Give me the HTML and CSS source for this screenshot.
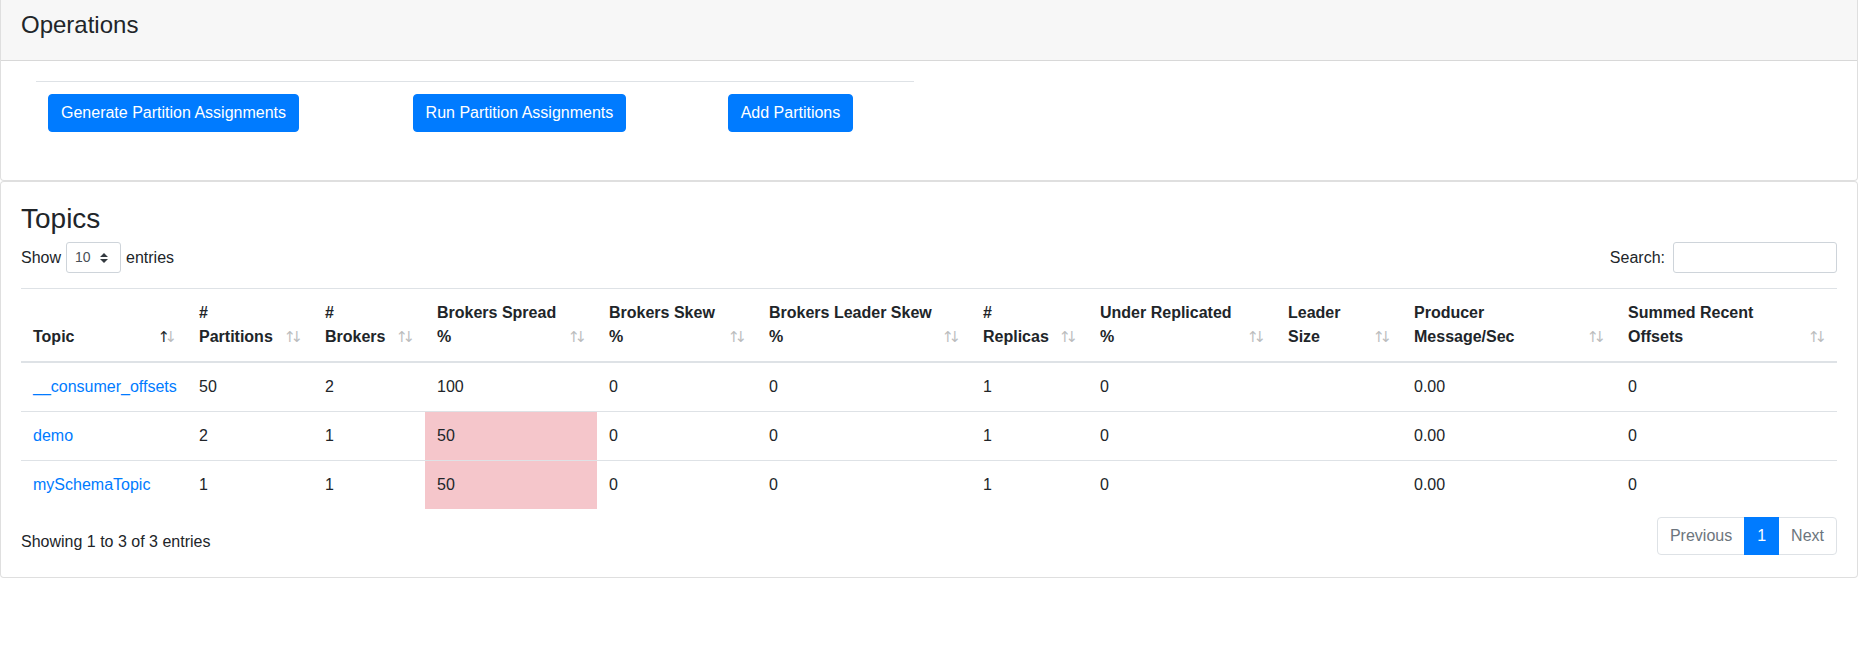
FILE: index.html
```html
<!DOCTYPE html>
<html lang="en">
<head>
<meta charset="utf-8">
<title>Operations</title>
<link rel="stylesheet" href="styles.css">
</head>
<body>
<div class="page">
  <section class="card card-ops">
    <div class="card-header"><h4 class="card-title">Operations</h4></div>
    <div class="card-body">
      <div class="ops-col">
        <table class="ops-table">
          <tr>
            <td><button class="btn" type="button">Generate Partition Assignments</button></td>
            <td><button class="btn" type="button">Run Partition Assignments</button></td>
            <td><button class="btn" type="button">Add Partitions</button></td>
          </tr>
        </table>
      </div>
    </div>
  </section>

  <section class="card card-topics">
    <div class="card-body">
      <h3 class="section-title">Topics</h3>
      <div class="dt-top">
        <label class="dt-length"><span>Show</span>
          <select class="select-sm">
            <option>10</option><option>25</option><option>50</option><option>100</option>
          </select>
          <span>entries</span></label>
        <label class="dt-filter"><span>Search:</span><input type="search" class="input-sm"></label>
      </div>
      <table class="topics">
        <thead>
          <tr>
            <th class="c1 sort-asc">Topic</th>
            <th class="c2">#<br>Partitions</th>
            <th class="c3">#<br>Brokers</th>
            <th class="c4">Brokers Spread<br>%</th>
            <th class="c5">Brokers Skew<br>%</th>
            <th class="c6">Brokers Leader Skew<br>%</th>
            <th class="c7">#<br>Replicas</th>
            <th class="c8">Under Replicated<br>%</th>
            <th class="c9">Leader<br>Size</th>
            <th class="c10">Producer<br>Message/Sec</th>
            <th class="c11">Summed Recent<br>Offsets</th>
          </tr>
        </thead>
        <tbody>
          <tr>
            <td><a href="#">__consumer_offsets</a></td>
            <td>50</td><td>2</td><td>100</td><td>0</td><td>0</td><td>1</td><td>0</td><td></td><td>0.00</td><td>0</td>
          </tr>
          <tr>
            <td><a href="#">demo</a></td>
            <td>2</td><td>1</td><td class="danger">50</td><td>0</td><td>0</td><td>1</td><td>0</td><td></td><td>0.00</td><td>0</td>
          </tr>
          <tr>
            <td><a href="#">mySchemaTopic</a></td>
            <td>1</td><td>1</td><td class="danger">50</td><td>0</td><td>0</td><td>1</td><td>0</td><td></td><td>0.00</td><td>0</td>
          </tr>
        </tbody>
      </table>
      <div class="dt-bottom">
        <div class="dt-info">Showing 1 to 3 of 3 entries</div>
        <ul class="pagination">
          <li class="page-item disabled"><a class="page-link" href="#">Previous</a></li>
          <li class="page-item active"><a class="page-link" href="#">1</a></li>
          <li class="page-item disabled"><a class="page-link" href="#">Next</a></li>
        </ul>
      </div>
    </div>
  </section>
</div>
</body>
</html>
```

FILE: styles.css
```css
* { box-sizing: border-box; }
html, body { margin: 0; padding: 0; }
body {
  font-family: "Liberation Sans", Arial, sans-serif;
  font-size: 16px;
  line-height: 1.5;
  color: #212529;
  background: #fff;
}
.page { padding-right: 2px; }

.card {
  border: 1px solid rgba(0, 0, 0, 0.125);
  border-radius: 4px;
  background: #fff;
}
.card-ops { border-top: 0; border-radius: 0 0 4px 4px; }
.card-header {
  background: #f7f7f7;
  border-bottom: 1px solid rgba(0, 0, 0, 0.125);
  padding: 11px 20px 12px;
}
.card-title {
  margin: 0 0 8px;
  font-size: 24px;
  font-weight: 500;
  line-height: 1.2;
}
.card-body { padding: 20px; }

.ops-col { width: 50%; padding: 0 15px; }
.ops-table { width: 100%; border-collapse: collapse; margin-bottom: 16px; }
.ops-table td {
  border-top: 1px solid #dee2e6;
  padding: 12px;
  vertical-align: top;
}
.btn {
  font: inherit;
  font-size: 16px;
  line-height: 1.5;
  color: #fff;
  background: #007bff;
  border: 1px solid #007bff;
  border-radius: 4px;
  padding: 6px 12px;
  cursor: pointer;
}

.section-title {
  margin: 0 0 7px;
  font-size: 28px;
  font-weight: 500;
  line-height: 1.2;
}
.dt-top {
  display: flex;
  justify-content: space-between;
  align-items: center;
  height: 31px;
  margin-bottom: 15px;
}
.dt-top label { display: flex; align-items: center; font-weight: 400; }
.dt-length { gap: 5px; }
.select-sm {
  -webkit-appearance: none;
  appearance: none;
  width: 55px;
  height: 31px;
  padding: 4px 28px 4px 8px;
  font-family: inherit;
  font-size: 14px;
  line-height: 1.5;
  color: #495057;
  border: 1px solid #ced4da;
  border-radius: 3px;
  background: #fff url("data:image/svg+xml,%3csvg xmlns='http://www.w3.org/2000/svg' width='4' height='5' viewBox='0 0 4 5'%3e%3cpath fill='%23343a40' d='M2 0L0 2h4zm0 5L0 3h4z'/%3e%3c/svg%3e") no-repeat right 12px center / 8px 10px;
}
.input-sm {
  width: 164px;
  height: 31px;
  margin-left: 8px;
  padding: 4px 8px;
  font-family: inherit;
  font-size: 14px;
  border: 1px solid #ced4da;
  border-radius: 3px;
  background: #fff;
}

.topics {
  width: 100%;
  table-layout: fixed;
  border-collapse: collapse;
}
.topics th, .topics td {
  padding: 12px;
  text-align: left;
  border-top: 1px solid #dee2e6;
}
.topics th {
  position: relative;
  vertical-align: bottom;
  border-bottom: 2px solid #dee2e6;
  font-weight: 700;
  padding-right: 30px;
}
.topics td { vertical-align: top; }
.topics th::before, .topics th::after {
  position: absolute;
  bottom: 0.8em;
  display: block;
  opacity: 0.3;
  font-family: "DejaVu Sans", sans-serif;
  font-size: 15px;
  font-weight: 400;
  line-height: 24px;
}
.topics th::before { content: "\2191"; right: 17px; }
.topics th::after { content: "\2193"; right: 10px; }
.topics th.sort-asc::before { opacity: 1; }

.c1 { width: 166px; }
.c2 { width: 126px; }
.c3 { width: 112px; }
.c4 { width: 172px; }
.c5 { width: 160px; }
.c6 { width: 214px; }
.c7 { width: 117px; }
.c8 { width: 188px; }
.c9 { width: 126px; }
.c10 { width: 214px; }
.c11 { width: 221px; }

.topics a { color: #007bff; text-decoration: none; }
.topics td.danger { background: #f5c6cb; }

.dt-bottom {
  display: flex;
  justify-content: space-between;
  align-items: flex-start;
  margin-top: 6px;
}
.dt-info { padding-top: 15px; }
.pagination {
  display: flex;
  list-style: none;
  margin: 2px 0;
  padding: 0;
}
.page-link {
  display: block;
  padding: 8px 12px;
  line-height: 1.25;
  margin-left: -1px;
  color: #007bff;
  background: #fff;
  border: 1px solid #dee2e6;
  text-decoration: none;
}
.page-item:first-child .page-link { margin-left: 0; border-radius: 4px 0 0 4px; }
.page-item:last-child .page-link { border-radius: 0 4px 4px 0; }
.page-item.active .page-link {
  position: relative;
  z-index: 1;
  color: #fff;
  background: #007bff;
  border-color: #007bff;
}
.page-item.disabled .page-link { color: #6c757d; }
```
